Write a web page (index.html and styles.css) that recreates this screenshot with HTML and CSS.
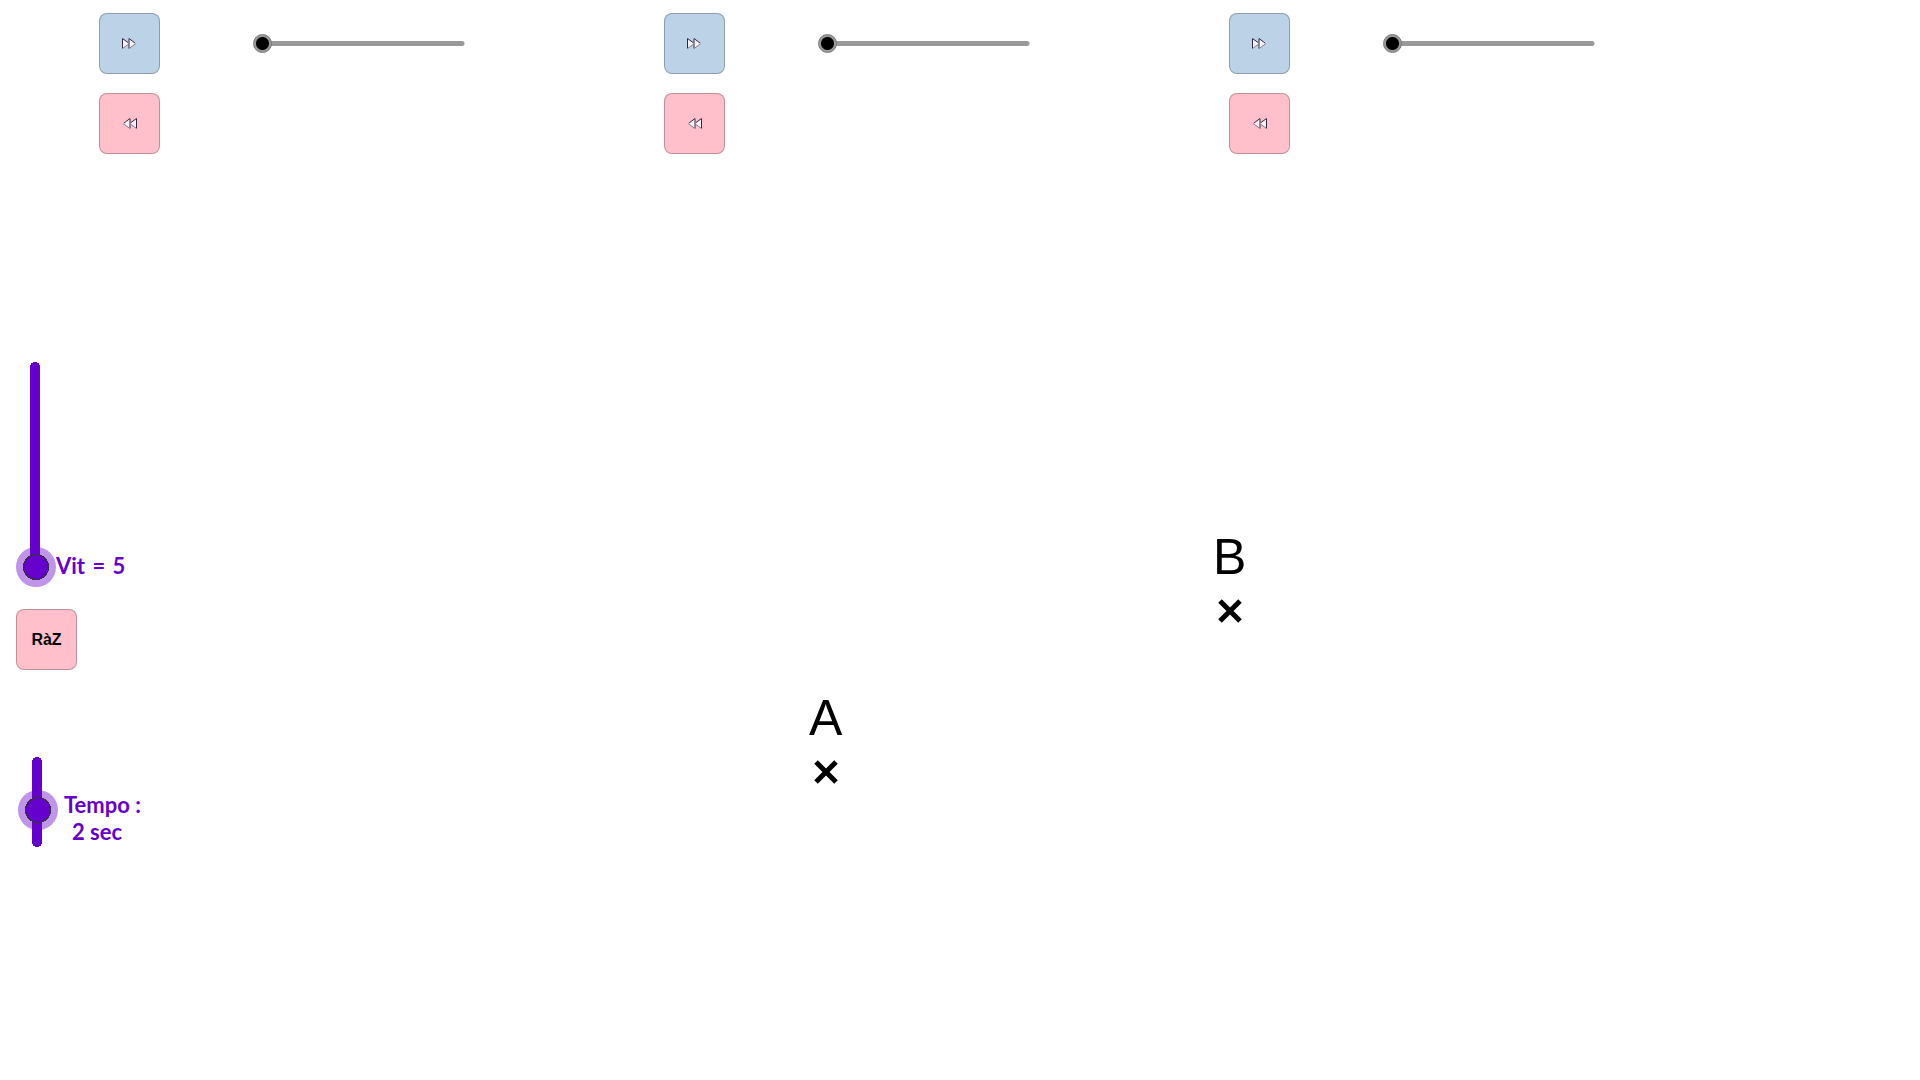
FILE: index.html
```html
<!DOCTYPE html>
<html lang="fr">
<head>
<meta charset="utf-8">
<meta name="viewport" content="width=device-width, initial-scale=1">
<title>Points A et B</title>
<link rel="stylesheet" href="styles.css">
</head>
<body>
<svg class="sprite">
  <symbol id="forward" viewBox="0 0 15 11">
    <path d="M.5.5v10L7 5.500zM7 .5v10L14 5.500z" fill="#f4f1f8"/>
    <path d="M.5 10.500v-10L6 4.500M7 10.500v-10L13 5" fill="none" stroke="#33283f"/>
    <path d="M.5 10.500L6 6.500M7 10.500L14 5.500" fill="none" stroke="#858088"/>
  </symbol>
  <symbol id="rewind" viewBox="0 0 15 11">
    <path d="M14.500.5v10L8 5.500zM8 .5v10L1 5.500z" fill="#f4f1f8"/>
    <path d="M14.500 10.500v-10L9 4.500M8 10.500v-10L2 5" fill="none" stroke="#33283f"/>
    <path d="M14.500 10.500L9 6.500M8 10.500L1 5.500" fill="none" stroke="#858088"/>
  </symbol>
</svg>
<header class="steps">
  <section class="step">
    <div class="buttons">
      <button class="button next" aria-label="Avancer"><svg class="icon"><use href="#forward"/></svg></button>
      <button class="button back" aria-label="Reculer"><svg class="icon"><use href="#rewind"/></svg></button>
    </div>
    <input class="progress" type="range" min="0" max="10" value="0" aria-label="Étape 1">
  </section>
  <section class="step">
    <div class="buttons">
      <button class="button next" aria-label="Avancer"><svg class="icon"><use href="#forward"/></svg></button>
      <button class="button back" aria-label="Reculer"><svg class="icon"><use href="#rewind"/></svg></button>
    </div>
    <input class="progress" type="range" min="0" max="10" value="0" aria-label="Étape 2">
  </section>
  <section class="step">
    <div class="buttons">
      <button class="button next" aria-label="Avancer"><svg class="icon"><use href="#forward"/></svg></button>
      <button class="button back" aria-label="Reculer"><svg class="icon"><use href="#rewind"/></svg></button>
    </div>
    <input class="progress" type="range" min="0" max="10" value="0" aria-label="Étape 3">
  </section>
</header>
<main class="board">
  <div class="settings">
    <div class="setting speed">
      <input class="level" id="vit" type="range" min="5" max="50" value="5">
      <label class="caption" for="vit">Vit <span class="sign">=</span> 5</label>
    </div>
    <button class="button back reset">RàZ</button>
    <div class="setting tempo">
      <input class="level" id="tempo" type="range" min="0" max="5" value="2">
      <label class="caption" for="tempo">Tempo :<span class="value">2 sec</span></label>
    </div>
  </div>
  <div class="point point-a">
    <span>A</span>
    <svg class="cross" viewBox="0 0 24 24"><path d="M2 2l20 20M22 2L2 22"/></svg>
  </div>
  <div class="point point-b">
    <span>B</span>
    <svg class="cross" viewBox="0 0 24 24"><path d="M2 2l20 20M22 2L2 22"/></svg>
  </div>
</main>
</body>
</html>
```
FILE: styles.css
```css
* {
  box-sizing: border-box;
}

body {
  margin: 0;
  min-height: 100vh;
  background: #fff;
  color: #000;
  font-family: "Liberation Sans", Arial, sans-serif;
}

.sprite {
  display: none;
}

/* Step controls across the top */
.steps {
  display: grid;
  grid-template-columns: repeat(3, 1fr);
  padding: 13px 126px 0 99px;
}

.step {
  display: flex;
  gap: 93px;
}

.buttons {
  display: flex;
  flex-direction: column;
  gap: 19px;
}

.button {
  display: flex;
  align-items: center;
  justify-content: center;
  width: 61px;
  height: 61px;
  padding: 0;
  border: 1px solid rgba(0, 0, 0, 0.25);
  border-radius: 8px;
  color: #000;
  font: bold 16px "Liberation Sans", Arial, sans-serif;
}

.next {
  background: #bcd2e6;
}

.back {
  background: #ffc0cb;
}

.icon {
  width: 15px;
  height: 11px;
}

/* Horizontal slider: the bar runs from centre to centre of the handle's travel */
.progress {
  appearance: none;
  width: 219px;
  height: 19px;
  margin: 21px 0 0;
  background:
    radial-gradient(circle at 209px 50%, #999 2px, transparent 3px),
    linear-gradient(#999, #999) 9px 7px / 200px 5px no-repeat;
}

.progress::-webkit-slider-thumb {
  appearance: none;
  width: 19px;
  height: 19px;
  border: 1px solid #777;
  border-radius: 50%;
  background: radial-gradient(circle, #000 6px, #999 7px);
}

/* Vertical sliders on the left */
.settings {
  display: flex;
  flex-direction: column;
  align-items: flex-start;
  padding: 193px 0 0 16px;
}

.setting {
  display: flex;
}

.level {
  appearance: none;
  writing-mode: vertical-lr;
  direction: rtl;
  width: 40px;
  height: 240px;
  margin: 0;
  background:
    radial-gradient(circle at 19px 20px, #60c 5px, transparent 5px),
    radial-gradient(circle at 19px calc(100% - 20px), #60c 5px, transparent 5px),
    linear-gradient(#60c, #60c) 14px 20px / 10px calc(100% - 40px) no-repeat;
}

.level::-webkit-slider-thumb {
  appearance: none;
  width: 40px;
  height: 40px;
  border-radius: 50%;
  background: radial-gradient(circle, #60c 12px, #333 12px, #333 13px, rgba(102, 0, 204, 0.42) 13px);
}

.caption {
  color: #60c;
  font: bold 22px/27px Lato, sans-serif;
}

.sign {
  margin: 0 2px;
}

.value {
  display: block;
  padding-left: 8px;
}

.speed .caption {
  align-self: flex-end;
  margin-bottom: 8px;
}

.reset {
  margin-top: 22px;
}

.tempo {
  margin: 72px 0 0 2px;
}

.tempo .level {
  height: 120px;
}

.tempo .caption {
  margin: 49px 0 0 6px;
}

/* Points placed freely on the board */
.board {
  position: relative;
}

.point {
  position: absolute;
  display: flex;
  flex-direction: column;
  align-items: center;
  gap: 14px;
  font-size: 50px;
  line-height: 56px;
}

.point-a {
  left: 809px;
  top: 536px;
}

.point-b {
  left: 1213px;
  top: 375px;
}

.cross {
  width: 24px;
  height: 24px;
  fill: none;
  stroke: #000;
  stroke-width: 5;
}
```
